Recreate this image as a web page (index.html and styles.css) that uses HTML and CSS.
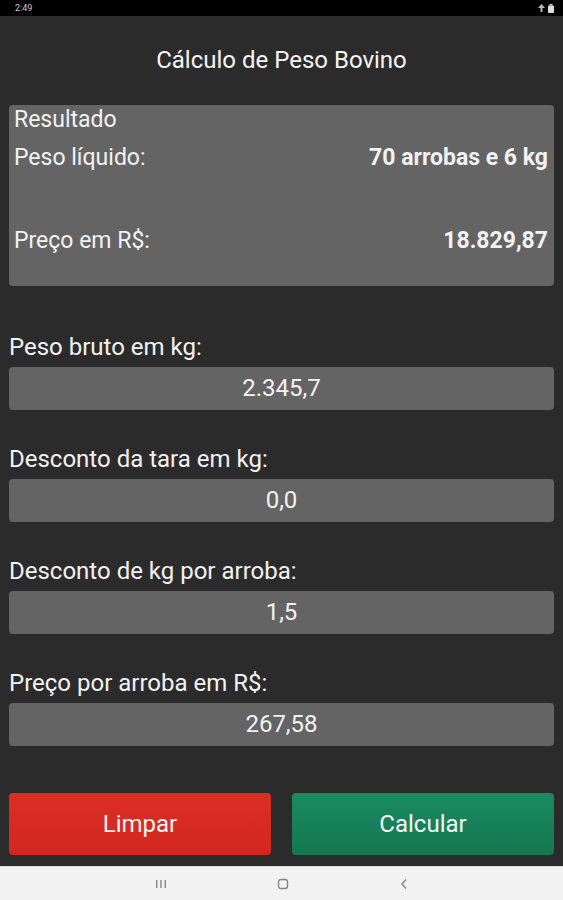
FILE: index.html
```html
<!DOCTYPE html>
<html lang="pt">
<head>
<meta charset="utf-8">
<title>Cálculo de Peso Bovino</title>
<link rel="stylesheet" href="styles.css">
</head>
<body>
<div class="screen">
  <div class="status">
    <span class="time">2:49</span>
    <span class="status-icons">
      <svg width="9" height="8" viewBox="0 0 9 8"><path d="M4.5 0 L8 4 H5.5 V8 H3.5 V4 H1 Z" fill="#bbb"/></svg>
      <svg width="6" height="9" viewBox="0 0 6 9"><rect x="1.5" y="0" width="3" height="1.5" fill="#ccc"/><rect x="0" y="1.5" width="6" height="7.5" rx="0.8" fill="#ddd"/></svg>
    </span>
  </div>
  <div class="app">
    <h1 class="title">Cálculo de Peso Bovino</h1>
    <div class="result">
      <div class="result-head">Resultado</div>
      <div class="result-row"><span>Peso líquido:</span><b>70 arrobas e 6 kg</b></div>
      <div class="result-row price"><span>Preço em R$:</span><b>18.829,87</b></div>
    </div>
    <div class="fields">
      <div class="field"><label>Peso bruto em kg:</label><div class="input">2.345,7</div></div>
      <div class="field"><label>Desconto da tara em kg:</label><div class="input">0,0</div></div>
      <div class="field"><label>Desconto de kg por arroba:</label><div class="input">1,5</div></div>
      <div class="field"><label>Preço por arroba em R$:</label><div class="input">267,58</div></div>
    </div>
    <div class="buttons">
      <button class="btn red">Limpar</button>
      <button class="btn green">Calcular</button>
    </div>
  </div>
  <div class="navbar">
    <svg width="12" height="10" viewBox="0 0 12 10"><rect x="1" y="1" width="1.4" height="8" fill="#888"/><rect x="5.3" y="1" width="1.4" height="8" fill="#888"/><rect x="9.6" y="1" width="1.4" height="8" fill="#888"/></svg>
    <svg width="12" height="12" viewBox="0 0 12 12"><rect x="1.5" y="1.5" width="9" height="9" rx="2.5" fill="none" stroke="#888" stroke-width="1.4"/></svg>
    <svg width="10" height="12" viewBox="0 0 10 12"><path d="M7 1.5 L3 6 L7 10.5" fill="none" stroke="#888" stroke-width="1.4"/></svg>
  </div>
</div>
</body>
</html>
```
FILE: styles.css
```css
* { box-sizing: border-box; }
html, body { margin: 0; padding: 0; }
body {
  width: 563px;
  height: 900px;
  background: #2b2b2b;
  font-family: Roboto, "Liberation Sans", sans-serif;
  color: #f2f2f2;
}
.screen { display: flex; flex-direction: column; height: 900px; }
.status {
  height: 16px;
  background: #000;
  display: flex;
  justify-content: space-between;
  align-items: center;
  padding: 0 9px 0 15px;
  flex: none;
}
.time { font-size: 9px; color: #ccc; }
.status-icons { display: flex; gap: 2px; align-items: center; }
.app {
  flex: 1;
  display: flex;
  flex-direction: column;
  padding: 0 9px;
}
.title {
  margin: 0;
  height: 89px;
  padding-top: 29px;
  text-align: center;
  font-weight: 400;
  font-size: 24px;
  line-height: 30px;
  color: #f5f5f5;
}
.result {
  background: #646464;
  border-radius: 4px;
  height: 181px;
  padding: 2px 6px 0 5px;
  font-size: 23px;
}
.result-head { line-height: 26px; height: 26px; }
.result-row {
  display: flex;
  justify-content: space-between;
  line-height: 26px;
  margin-top: 12px;
}
.result-row.price { margin-top: 57px; }
.result-row b { font-weight: 700; }
.fields { display: flex; flex-direction: column; margin-top: 47px; gap: 35px; }
.field { display: flex; flex-direction: column; gap: 6px; }
.field label { font-size: 24px; line-height: 28px; }
.input {
  height: 43px;
  background: #646464;
  border-radius: 4px;
  text-align: center;
  line-height: 43px;
  font-size: 24px;
}
.buttons {
  display: flex;
  gap: 21px;
  margin-top: 47px;
}
.btn {
  flex: 1;
  height: 62px;
  border: 0;
  border-radius: 4px;
  color: #f5f5f5;
  font-family: Roboto, "Liberation Sans", sans-serif;
  font-size: 24px;
}
.btn.red { background: linear-gradient(#dc2e23, #d1281f); }
.btn.green { background: linear-gradient(#1a8a63, #147850); }
.navbar {
  height: 34px;
  flex: none;
  background: #f2f2f2;
  border-top: 1px solid #ddd;
  display: flex;
  align-items: center;
  justify-content: center;
  gap: 110px;
}
```
